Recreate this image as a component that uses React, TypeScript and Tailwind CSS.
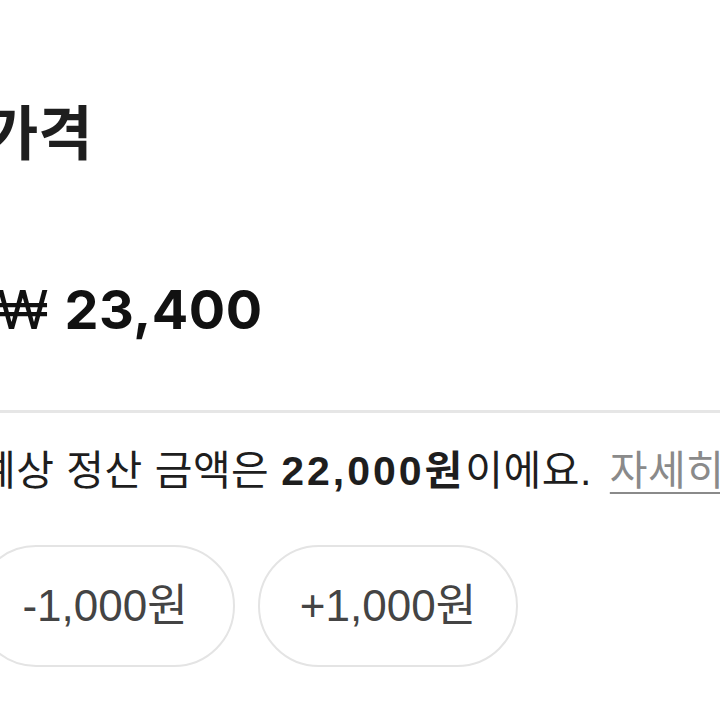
const sans = 'font-["Liberation_Sans","Noto_Sans_CJK_KR",sans-serif]';

export default function App() {
  return (
    <div className="w-[720px] h-[720px] overflow-hidden bg-white">
      <div className="-ml-[22px] flex flex-col">
        {/* Title */}
        <h1 className="pt-[96px] pl-[6px] text-[59px] leading-[68px] font-bold text-[#1e1e1e] font-['Noto_Sans_CJK_KR',sans-serif]">
          가격
        </h1>

        {/* Price */}
        <div className="mt-[113px] pl-[19px] flex items-center h-[64px] font-['Inter','Noto_Sans_CJK_KR',sans-serif] text-[#111]">
          <span className="text-[54px] font-normal">₩</span>
          <span className="ml-[16px] text-[54px] font-bold tracking-[0.5px]">23,400</span>
        </div>

        <div className="mt-[69px] h-[3px] w-[760px] bg-[#e6e6e6]" />

        {/* Settlement notice */}
        <p className={`mt-[34px] h-[48px] whitespace-nowrap text-[41px] leading-[48px] tracking-[0.5px] text-[#1e1e1e] ${sans}`}>
          예상 정산 금액은 <span className="font-bold tracking-[3px]">22,000원</span>이에요.{' '}
          <span className="ml-[6px] text-[#8a8a8a] underline underline-offset-[7px] decoration-2">자세히</span>
        </p>

        {/* Adjust buttons */}
        <div className="mt-[50px] flex gap-[23px] -ml-[3px]">
          {['-1,000원', '+1,000원'].map((label) => (
            <button
              key={label}
              className={`w-[260px] h-[122px] rounded-full border-2 border-[#e4e4e4] bg-white text-[44px] text-[#444] ${sans}`}
            >
              {label}
            </button>
          ))}
        </div>
      </div>
    </div>
  );
}
